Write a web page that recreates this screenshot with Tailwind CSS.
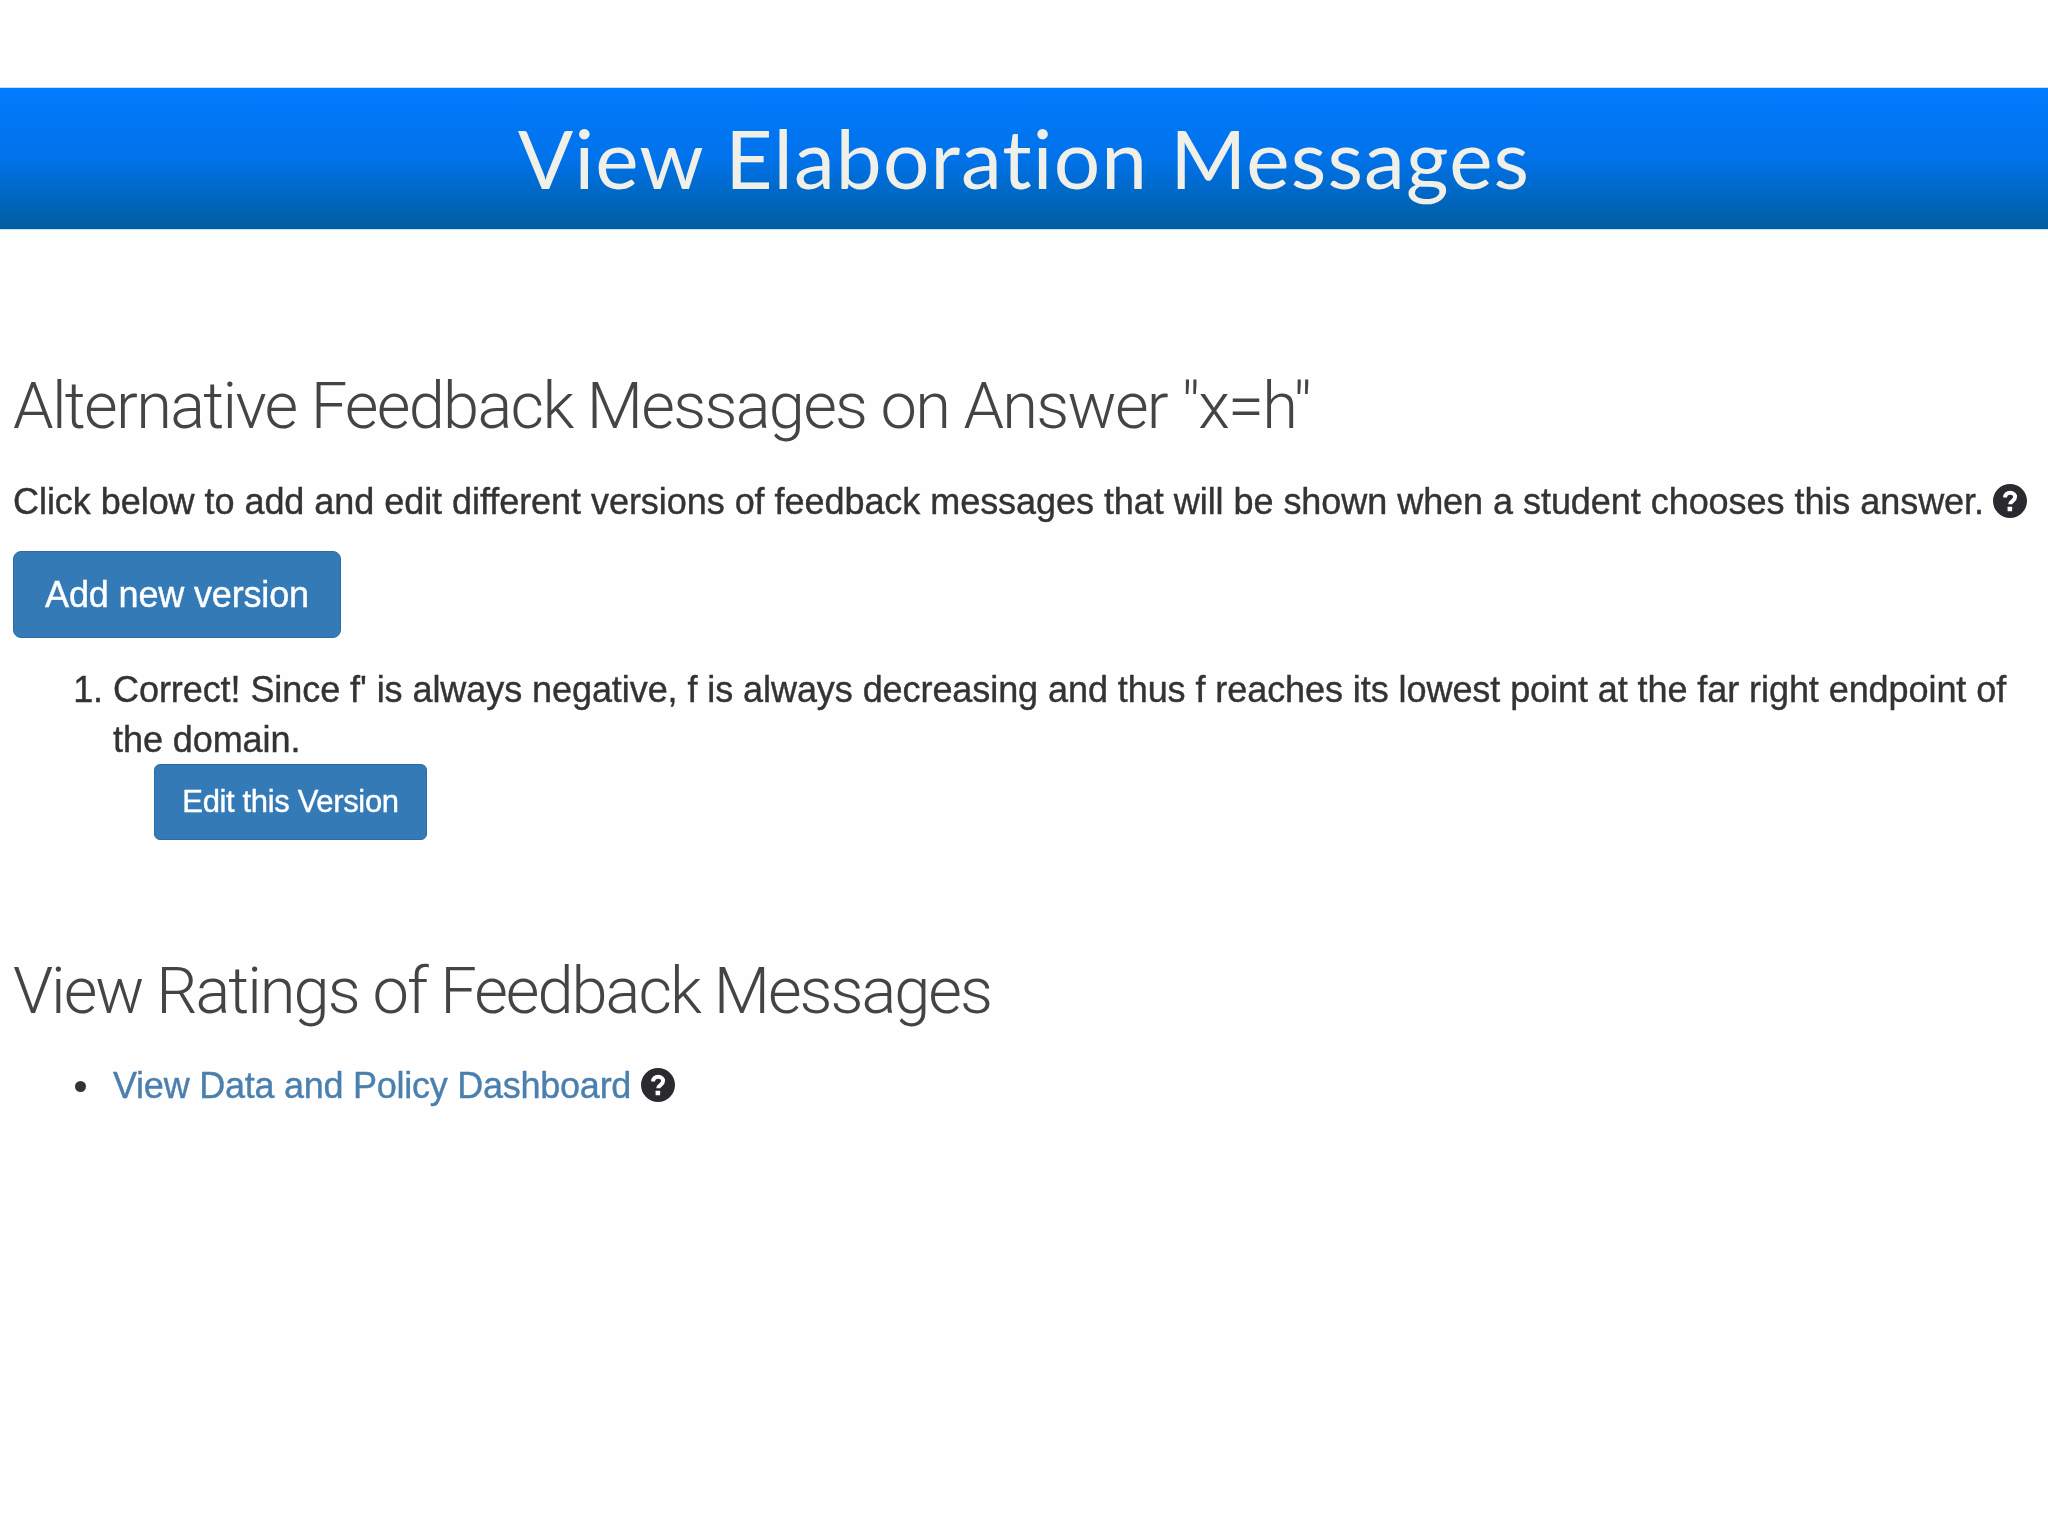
<!DOCTYPE html>
<html lang="en">
<head>
<meta charset="UTF-8">
<script src="https://cdn.jsdelivr.net/npm/@tailwindcss/browser@4"></script>
<title>View Elaboration Messages</title>
</head>
<body class="bg-[#fefefe] font-['Liberation_Sans',sans-serif] text-[#333] w-[2048px] h-[1536px] overflow-hidden">
	<div class="h-[87px]"></div>
	<!-- title bar -->
	<header class="h-[143px] flex items-center justify-center bg-gradient-to-b from-[#017bff] via-[#0172ea] via-50% to-[#015d9f] border-y border-[#bfe0ff]">
		<h1 class="font-['Lato',sans-serif] text-[82px] leading-none text-[#f0efe8] pb-1 tracking-[1.15px]">View Elaboration Messages</h1>
	</header>

	<main class="pl-[13px] pt-[140px] blur-[0.7px]">
		<h2 class="font-['Roboto',sans-serif] font-light text-[65px] leading-[72px] text-[#444] tracking-[-1.7px]">Alternative Feedback Messages on Answer "x=h"</h2>
		<p class="flex items-center gap-[9px] mt-[36px] text-[36px] leading-[48px] whitespace-nowrap tracking-[-0.045px] [-webkit-text-stroke:0.4px]">
			Click below to add and edit different versions of feedback messages that will be shown when a student chooses this answer.
			<svg class="w-[34px] h-[34px] shrink-0 -mt-[3px]" viewBox="0 0 24 24"><circle cx="12" cy="12" r="12" fill="#2b2b2f"/><path d="M8.500 9.600c0-2.200 1.500-3.400 3.600-3.400 2.100 0 3.500 1.200 3.500 3 0 2.600-3.400 2.700-3.400 5.100" fill="none" stroke="#fff" stroke-width="2.800"/><rect x="10.300" y="16" width="3.200" height="3.200" rx=".4" fill="#fff"/></svg>
		</p>
		<button class="block mt-[25px] w-[328px] h-[87px] rounded-[8px] bg-[#337ab7] border border-[#2e6da4] text-white text-[36px] tracking-[-0.15px] [-webkit-text-stroke:0.4px]">Add new version</button>

		<ol class="mt-[27px] pl-[100px] pr-[20px] text-[36px] leading-[50px] list-decimal tracking-[-0.07px] [-webkit-text-stroke:0.4px]">
			<li>Correct! Since f' is always negative, f is always decreasing and thus f reaches its lowest point at the far right endpoint of the domain.
				<button class="block ml-[41px] mt-[-1px] w-[273px] h-[76px] rounded-[6px] bg-[#337ab7] border border-[#2e6da4] text-white text-[31px] tracking-[-0.35px] [-webkit-text-stroke:0.4px]">Edit this Version</button>
			</li>
		</ol>

		<h2 class="mt-[115px] font-['Roboto',sans-serif] font-light text-[65px] leading-[72px] text-[#444] tracking-[-2px]">View Ratings of Feedback Messages</h2>
		<ul class="mt-[34px] pl-[62px] text-[36px] leading-[50px]">
			<li class="flex items-center">
				<span class="w-[11px] h-[11px] rounded-full bg-[#333] mr-[27px]"></span>
				<a class="text-[#4a7fae] tracking-[-0.25px] [-webkit-text-stroke:0.4px]" href="#">View Data and Policy Dashboard</a>
				<svg class="ml-[10px] w-[34px] h-[34px] -mt-[3px]" viewBox="0 0 24 24"><circle cx="12" cy="12" r="12" fill="#2b2b2f"/><path d="M8.500 9.600c0-2.200 1.500-3.400 3.600-3.400 2.100 0 3.500 1.200 3.500 3 0 2.600-3.400 2.700-3.400 5.100" fill="none" stroke="#fff" stroke-width="2.800"/><rect x="10.300" y="16" width="3.200" height="3.200" rx=".4" fill="#fff"/></svg>
			</li>
		</ul>
	</main>
</body>
</html>
